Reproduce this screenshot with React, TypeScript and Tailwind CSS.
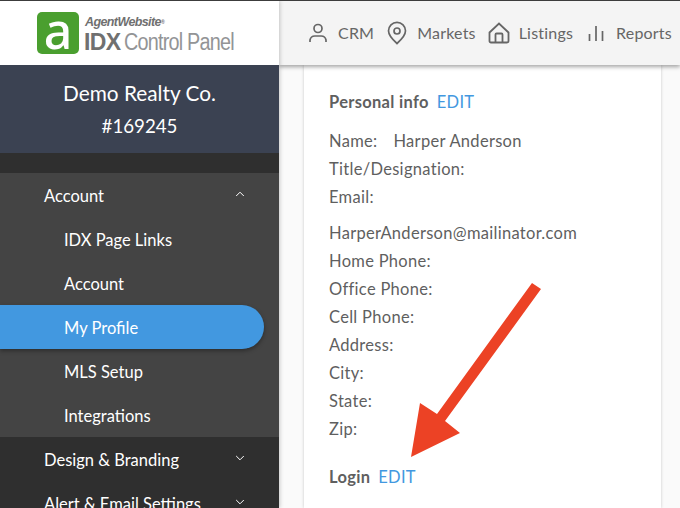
import React from "react";

const font = { fontFamily: '"Lato", "Noto Sans", sans-serif' };

function Chevron({ up }: { up?: boolean }) {
  return (
    <svg width="10" height="6" viewBox="0 0 10 6" fill="none" stroke="#ffffff" strokeWidth="1" className="mb-[6px]">
      <path d={up ? "M1.2 5 L5 1.2 L8.8 5" : "M1.2 1 L5 4.8 L8.8 1"} />
    </svg>
  );
}

function Logo() {
  return (
    <div className="flex items-center h-[42px] gap-[5px]">
      <div className="w-[42px] h-[42px] rounded-[5px] bg-[#4a9f2f] flex items-center justify-center">
        <span className="text-white text-[50px] leading-[42px] font-medium mt-[-6px] font-['Noto_Sans',sans-serif]">a</span>
      </div>
      <div className="flex flex-col justify-between h-[42px] font-['Liberation_Sans',sans-serif]">
        <div className="text-[12.5px] leading-[16px] font-bold italic tracking-[-0.6px] text-[#707070] ml-[1px] mt-[2px]">AgentWebsite<sup className="text-[5px]">®</sup></div>
        <div className="flex items-baseline leading-[24px] h-[24px] whitespace-nowrap">
          <span className="text-[23px] font-bold tracking-[-0.6px] text-[#707070]">IDX</span>
          <span className="text-[23px] tracking-[-0.9px] ml-[3px] text-[#939496] scale-x-[0.86] origin-left">Control Panel</span>
        </div>
      </div>
    </div>
  );
}

function SubItem({ label, active }: { label: string; active?: boolean }) {
  return (
    <div
      className={
        active
          ? "h-[44px] w-[264px] pl-[64px] pt-[3px] flex items-center bg-[#4298e0] rounded-r-[22px] text-white text-[16.5px] shadow-[0_2px_4px_rgba(0,0,0,0.35)]"
          : "h-[44px] pl-[64px] pt-[3px] flex items-center text-white text-[16.5px]"
      }
    >
      {label}
    </div>
  );
}

function Top({ label, up }: { label: string; up?: boolean }) {
  return (
    <div className="h-[44px] pl-[44px] pr-[34px] pt-[3px] flex items-center justify-between text-white text-[16.5px] shrink-0">
      <span className="whitespace-nowrap">{label}</span>
      <Chevron up={up} />
    </div>
  );
}

function Nav({ label, icon }: { label: string; icon: React.ReactNode }) {
  return (
    <div className="flex items-center text-[#666] text-[16px] tracking-[0.2px]">
      {icon}
      <span>{label}</span>
    </div>
  );
}

const Row = ({ children }: { children: React.ReactNode }) => (
  <div className="h-[28px] flex items-center whitespace-nowrap">{children}</div>
);

export default function App() {
  return (
    <div style={font} className="relative w-[680px] h-[508px] overflow-hidden bg-[#fafafa] flex flex-col border-t border-[#3c3c3c]">
      <div className="flex flex-1 min-h-0">
        <aside className="w-[279px] shrink-0 flex flex-col z-20 shadow-[1px_0_4px_rgba(0,0,0,0.2)]">
          <div className="h-[64px] bg-white flex items-center pl-[37px] shrink-0">
            <Logo />
          </div>
          <div className="h-[88px] bg-[#3b4252] text-white flex flex-col items-center shrink-0">
            <div className="text-[20.8px] leading-[26px] mt-[15px]">Demo Realty Co.</div>
            <div className="text-[18.7px] leading-[24px] mt-[8px]">#169245</div>
          </div>
          <div className="flex-1 bg-[#2f2f2f] pt-[20px] min-h-0 overflow-hidden">
            <div className="bg-[#444444]">
              <Top label="Account" up />
              <SubItem label="IDX Page Links" />
              <SubItem label="Account" />
              <SubItem label="My Profile" active />
              <SubItem label="MLS Setup" />
              <SubItem label="Integrations" />
            </div>
            <Top label="Design & Branding" />
            <Top label="Alert & Email Settings" />
          </div>
        </aside>
        <div className="flex-1 min-w-0 flex flex-col relative">
          <header className="h-[64px] shrink-0 bg-[#f4f4f4] z-10 shadow-[0_2px_4px_rgba(0,0,0,0.35)] flex items-center pl-[28px] gap-[11px] whitespace-nowrap">
            <Nav
              label="CRM"
              icon={
                <svg width="24" height="24" viewBox="0 0 24 24" fill="none" stroke="#666" strokeWidth="1.7" className="mr-[8px] ml-[-1px]">
                  <circle cx="12" cy="7.5" r="4" />
                  <path d="M4 21 v-2 a5 5 0 0 1 5 -4 h6 a5 5 0 0 1 5 4 v2" />
                </svg>
              }
            />
            <Nav
              label="Markets"
              icon={
                <svg width="24" height="24" viewBox="0 0 24 24" fill="none" stroke="#666" strokeWidth="1.7" className="mr-[8px]">
                  <path d="M12 22.5 C8 19 3.5 14.5 3.5 9.8 A8.5 8.5 0 0 1 20.5 9.8 C20.5 14.5 16 19 12 22.5 Z" />
                  <circle cx="12" cy="10" r="3" />
                </svg>
              }
            />
            <Nav
              label="Listings"
              icon={
                <svg width="24" height="24" viewBox="0 0 24 24" fill="none" stroke="#666" strokeWidth="1.8" className="mr-[8px]">
                  <path d="M2.5 11.5 L12 2.5 L21.5 11.5 V20 a1.5 1.5 0 0 1 -1.5 1.5 H4 A1.5 1.5 0 0 1 2.5 20 Z" />
                  <path d="M8.5 21.5 V13.5 a1 1 0 0 1 1 -1 h5 a1 1 0 0 1 1 1 V21.5" />
                </svg>
              }
            />
            <Nav
              label="Reports"
              icon={
                <svg width="24" height="24" viewBox="0 0 24 24" fill="none" stroke="#666" strokeWidth="1.7" className="mr-[8px]">
                  <path d="M5.5 20 V13 M12 20 V5 M18.5 20 V10" />
                </svg>
              }
            />
          </header>
          <main className="flex-1 min-h-0 overflow-hidden pl-[25px] pr-[19px]">
            <div className="bg-white h-full shadow-[0_0_3px_rgba(0,0,0,0.2)] pl-[25px] pt-[23px] text-[16.5px] text-[#5f5f5f] tracking-[0.3px]">
              <Row>
                <span className="font-bold mr-[8px]">Personal info</span>
                <span className="text-[#4298e0]">EDIT</span>
              </Row>
              <div className="h-[11px]" />
              <Row>
                <span className="mr-[16px]">Name:</span>
                <span>Harper Anderson</span>
              </Row>
              <Row>Title/Designation:</Row>
              <Row>Email:</Row>
              <div className="h-[8px]" />
              <Row>HarperAnderson@mailinator.com</Row>
              <Row>Home Phone:</Row>
              <Row>Office Phone:</Row>
              <Row>Cell Phone:</Row>
              <Row>Address:</Row>
              <Row>City:</Row>
              <Row>State:</Row>
              <Row>Zip:</Row>
              <div className="h-[20px]" />
              <Row>
                <span className="font-bold mr-[8px]">Login</span>
                <span className="text-[#4298e0]">EDIT</span>
              </Row>
            </div>
          </main>
        </div>
      </div>
      <svg className="absolute left-0 top-[-1px] z-30 pointer-events-none" width="680" height="508" viewBox="0 0 680 508">
        <polygon points="532,283 541,289 445,421 460,433 411,457 420,403 437,414" fill="#ec4225" />
      </svg>
    </div>
  );
}
